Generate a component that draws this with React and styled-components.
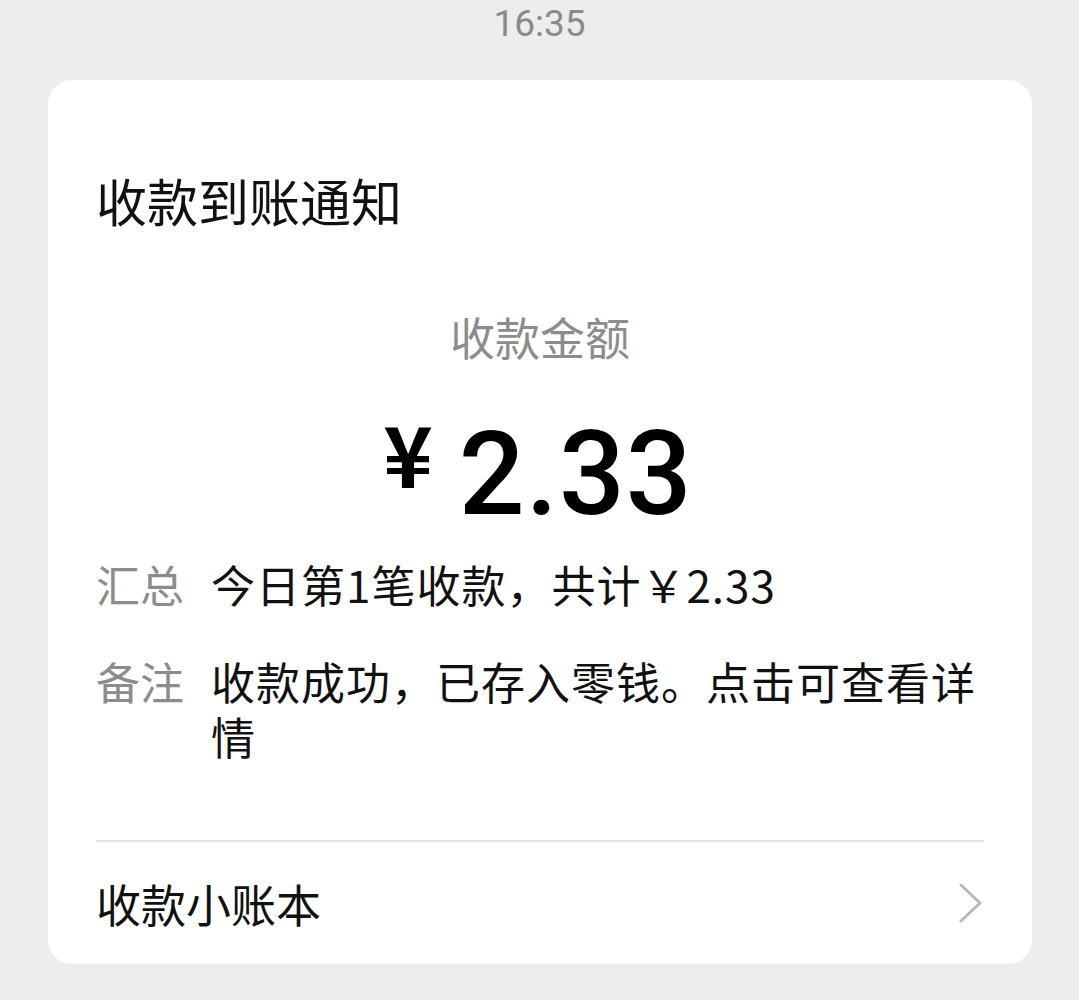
import styled, { createGlobalStyle } from "styled-components";

const GlobalStyle = createGlobalStyle`
  html, body {
    margin: 0;
    padding: 0;
    background-color: #ededed;
  }
  body {
    font-family: "Noto Sans CJK SC", "Noto Sans", sans-serif;
  }
`;

const Pagina = styled.div`
  width: 1079px;
  height: 1000px;
  background-color: #ededed;
  overflow: hidden;
`;

const BarraStatus = styled.div`
  height: 46px;
  display: flex;
  justify-content: center;
  align-items: center;
  font-family: Roboto, "Noto Sans", sans-serif;
  font-size: 37px;
  color: #8a8a8a;
`;

const Cartao = styled.main`
  margin: 34px 47px 0 48px;
  background-color: #fff;
  border-radius: 24px;
  padding: 0 48px;
`;

const Titulo = styled.h2`
  margin: 0;
  padding-top: 85px;
  font-size: 51px;
  line-height: 70px;
  font-weight: 400;
  color: #111;
`;

const RotuloValor = styled.div`
  margin-top: 72px;
  text-align: center;
  font-size: 45px;
  line-height: 60px;
  color: #8c8c8c;
`;

const Valor = styled.div`
  display: flex;
  justify-content: center;
  align-items: center;
  gap: 26px;
  margin-top: 23px;
  height: 167px;
  color: #000;
  padding-right: 4px;
`;

const Moeda = styled.span`
  font-family: "Noto Sans CJK SC", sans-serif;
  font-size: 84px;
  font-weight: 700;
  margin-top: -44px;
`;

const Numero = styled.span`
  font-family: Roboto, "Noto Sans", sans-serif;
  font-size: 116px;
  font-weight: 500;
  letter-spacing: 1px;
`;

const ListaInfo = styled.div`
  display: flex;
  flex-direction: column;
  gap: 42px;
  padding-bottom: 76px;
  border-bottom: 2px solid #e6e6e6;
`;

const LinhaInfo = styled.div`
  display: flex;
  gap: 27px;
  font-size: 44px;
  line-height: 55px;
`;

const Rotulo = styled.span`
  flex: none;
  width: 88px;
  color: #8c8c8c;
`;

const Conteudo = styled.span`
  flex: 1;
  color: #111;
  letter-spacing: 1px;
`;

const Rodape = styled.div`
  display: flex;
  justify-content: space-between;
  align-items: center;
  height: 122px;
  font-size: 45px;
  color: #111;
`;

const Seta = () => (
  <svg width="26" height="40" viewBox="0 0 26 40" fill="none">
    <path d="M3 2 L22 20 L3 38" stroke="#b8b8b8" strokeWidth="3" strokeLinecap="round" strokeLinejoin="round" />
  </svg>
);

export default function App() {
  return (
    <>
      <GlobalStyle />
      <Pagina>
        <BarraStatus>16:35</BarraStatus>
        <Cartao>
          <Titulo>收款到账通知</Titulo>
          <RotuloValor>收款金额</RotuloValor>
          <Valor>
            <Moeda>¥</Moeda>
            <Numero>2.33</Numero>
          </Valor>
          <ListaInfo>
            <LinhaInfo>
              <Rotulo>汇总</Rotulo>
              <Conteudo>今日第1笔收款，共计￥2.33</Conteudo>
            </LinhaInfo>
            <LinhaInfo>
              <Rotulo>备注</Rotulo>
              <Conteudo>收款成功，已存入零钱。点击可查看详情</Conteudo>
            </LinhaInfo>
          </ListaInfo>
          <Rodape>
            <span>收款小账本</span>
            <Seta />
          </Rodape>
        </Cartao>
      </Pagina>
    </>
  );
}
